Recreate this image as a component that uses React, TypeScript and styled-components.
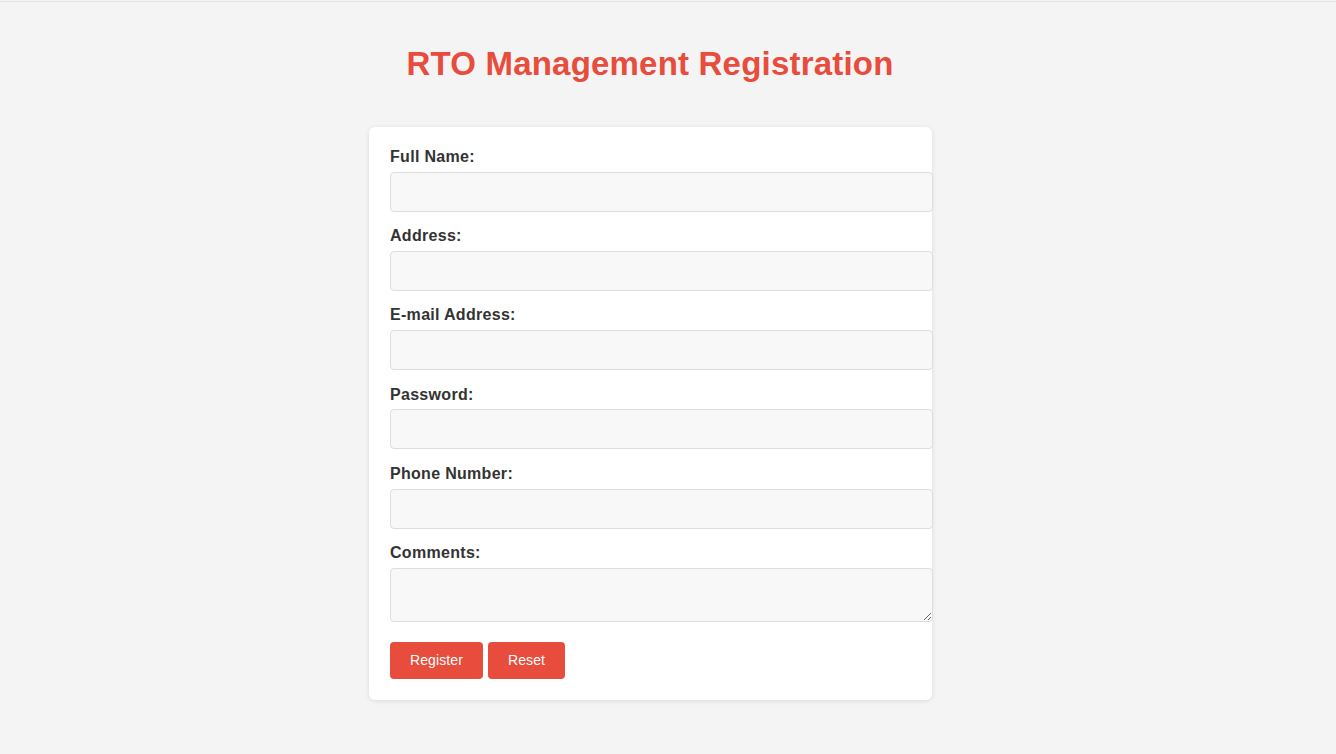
import React from "react";
import styled, { createGlobalStyle } from "styled-components";

const GlobalStyle = createGlobalStyle`
  html, body {
    margin: 0;
    padding: 0;
    background: #f4f4f4;
    font-family: "Liberation Sans", Arial, sans-serif;
  }
`;

const TopRule = styled.div`
  height: 1px;
  margin-top: 1px;
  background: #e3e3e3;
`;

const Page = styled.div`
  display: flex;
  flex-direction: column;
  align-items: center;
  padding-right: 35px;
  min-height: 752px;
  box-sizing: border-box;
`;

const Title = styled.h1`
  margin: 43px 0 45px;
  padding-right: 1px;
  font-size: 33px;
  line-height: 37px;
  letter-spacing: 0.2px;
  font-weight: 700;
  color: #e74c3c;
`;

const Card = styled.form`
  width: 563px;
  box-sizing: border-box;
  padding: 21px 20px 21px 21px;
  background: #ffffff;
  border-radius: 6px;
  box-shadow: 0 1px 5px rgba(0, 0, 0, 0.1);
  display: flex;
  flex-direction: column;
  align-items: flex-start;
`;

const Label = styled.label`
  display: block;
  font-size: 16px;
  line-height: 18.4px;
  letter-spacing: 0.3px;
  font-weight: 700;
  color: #333333;
  margin-bottom: 5.4px;
`;

const fieldCss = `
  display: block;
  width: calc(100% + 21px);
  box-sizing: border-box;
  padding: 10px;
  border: 1px solid #dddddd;
  border-radius: 4px;
  background: #f8f8f8;
  font-family: "Liberation Sans", Arial, sans-serif;
  font-size: 16px;
  color: #333;
  outline: none;
`;

const Input = styled.input`
  ${fieldCss}
  height: 40px;
  margin: 0 0 15.4px;
`;

const TextArea = styled.textarea`
  ${fieldCss}
  height: 54px;
  margin: 0 0 20px;
  resize: both;
`;

const ButtonRow = styled.div`
  display: flex;
  gap: 5px;
`;

const Button = styled.button`
  height: 37px;
  padding: 0 20px;
  border: none;
  border-radius: 4px;
  background: #e74c3c;
  color: #ffffff;
  font-family: "Liberation Sans", Arial, sans-serif;
  font-size: 14px;
  letter-spacing: 0.1px;
  cursor: pointer;
`;

const fields = [
  { id: "name", label: "Full Name:", type: "text" },
  { id: "address", label: "Address:", type: "text" },
  { id: "email", label: "E-mail Address:", type: "email" },
  { id: "password", label: "Password:", type: "password" },
  { id: "phone", label: "Phone Number:", type: "tel" },
];

export default function App() {
  return (
    <>
      <GlobalStyle />
      <TopRule />
      <Page>
        <Title>RTO Management Registration</Title>
        <Card onSubmit={(e) => e.preventDefault()}>
          {fields.map((f) => (
            <React.Fragment key={f.id}>
              <Label htmlFor={f.id}>{f.label}</Label>
              <Input id={f.id} type={f.type} />
            </React.Fragment>
          ))}
          <Label htmlFor="comments">Comments:</Label>
          <TextArea id="comments" />
          <ButtonRow>
            <Button type="submit">Register</Button>
            <Button type="reset">Reset</Button>
          </ButtonRow>
        </Card>
      </Page>
    </>
  );
}
